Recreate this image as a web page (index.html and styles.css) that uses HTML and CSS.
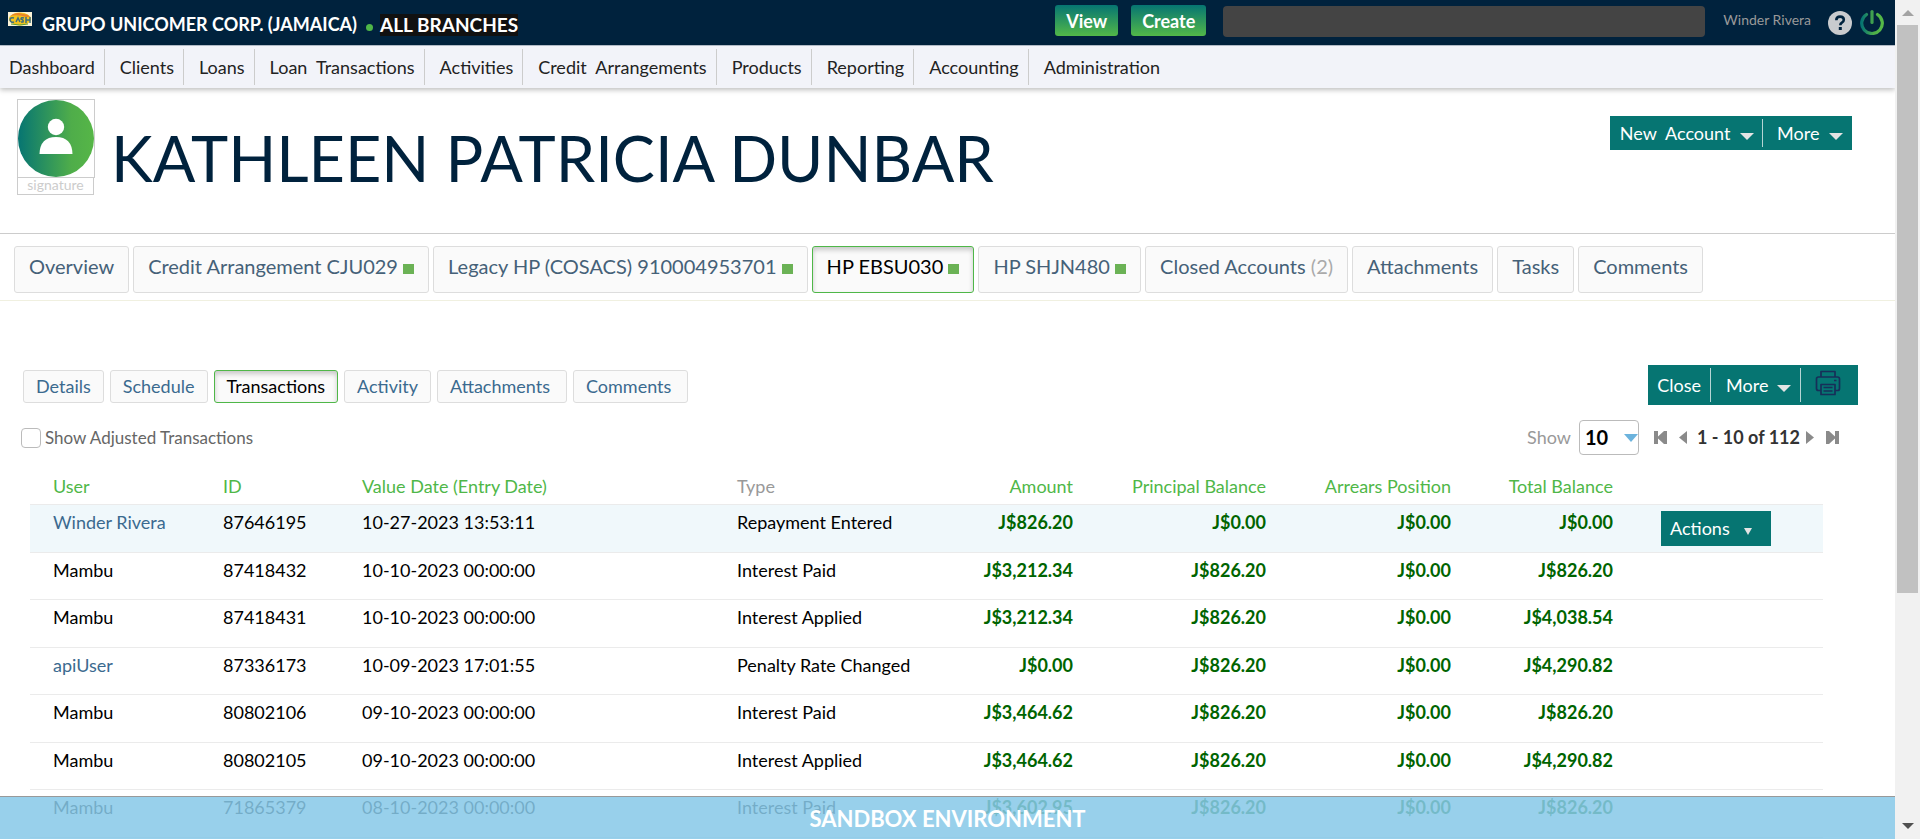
FILE: index.html
```html
<!DOCTYPE html>
<html lang="en">
<head>
<meta charset="utf-8">
<title>Kathleen Patricia Dunbar</title>
<link rel="stylesheet" href="styles.css">
</head>
<body>
<div class="app">
  <header class="topbar">
    <svg class="logo" width="24" height="14" viewBox="0 0 24 14" aria-hidden="true">
      <rect width="24" height="14" fill="#fbf3d8"/>
      <ellipse cx="12" cy="7" rx="11" ry="6.5" fill="#f3c31c"/>
      <path d="M2 4Q8 -1 15 2Q20 2 22 5L18 5Q10 2 2 4Z" fill="#e8842a"/>
      <path d="M6 6Q2 5 2 8Q3 11 6 10M8 10L10 6L12 10M16 6Q13 5 13 7Q16 8 15 10H13M18 5V11M22 5V11M18 8H22" fill="none" stroke="#3f6f7c" stroke-width="1.5"/>
      <path d="M3 12Q12 14 20 12" stroke="#5a9b3c" fill="none"/>
    </svg>
    <span class="org">GRUPO UNICOMER CORP. (JAMAICA)</span>
    <span class="branch-dot"></span>
    <span class="branch">ALL BRANCHES</span>
    <div class="topbar-right">
      <button class="top-btn" type="button">View</button>
      <button class="top-btn" type="button">Create</button>
      <input class="search" type="text" aria-label="Search">
      <a class="account" href="#">Winder Rivera</a>
      <button class="icon-btn" type="button" aria-label="Help">
        <svg width="24" height="24" viewBox="0 0 24 24"><circle cx="12" cy="12" r="12" fill="#c9cbce"/><path d="M8.3 9.2Q8.3 5.6 12.1 5.6Q15.8 5.6 15.8 8.8Q15.8 10.6 13.9 11.6Q12.3 12.5 12.3 14.2" fill="none" stroke="#00223d" stroke-width="2.6"/><rect x="10.8" y="16" width="3" height="3" fill="#00223d"/></svg>
      </button>
      <button class="icon-btn" type="button" aria-label="Log out">
        <svg width="24" height="26" viewBox="0 0 24 26"><defs><linearGradient id="pw" x1="0" x2="1"><stop offset="0" stop-color="#067572"/><stop offset=".6" stop-color="#4fae48"/><stop offset="1" stop-color="#55b947"/></linearGradient></defs><path d="M6.5 5.5A10.3 10.3 0 1 0 17.5 5.5" fill="none" stroke="url(#pw)" stroke-width="3.2" stroke-linecap="round"/><rect x="10.4" y="1" width="3.2" height="14" rx="1.6" fill="#3f9f50"/></svg>
      </button>
    </div>
  </header>

  <nav class="mainnav">
    <a href="#">Dashboard</a><a href="#">Clients</a><a href="#">Loans</a><a href="#">Loan&nbsp; Transactions</a><a href="#">Activities</a><a href="#">Credit&nbsp; Arrangements</a><a href="#">Products</a><a href="#">Reporting</a><a href="#">Accounting</a><a href="#">Administration</a>
  </nav>

  <section class="client">
    <div class="portrait">
      <div class="photo">
        <svg width="76" height="77" viewBox="0 0 76 77" aria-hidden="true"><defs><linearGradient id="av" x1="0" x2="1"><stop offset="0" stop-color="#067572"/><stop offset=".7" stop-color="#4fad4a"/><stop offset="1" stop-color="#56b647"/></linearGradient></defs><ellipse cx="38" cy="38.500" rx="38" ry="38.500" fill="url(#av)"/><circle cx="38" cy="27" r="8.200" fill="#fff"/><path d="M21.500 54Q22 37 38 37Q54 37 54.500 54Z" fill="#fff"/></svg>
      </div>
      <div class="signature">signature</div>
    </div>
    <h1 class="client-name">KATHLEEN PATRICIA DUNBAR</h1>
    <div class="toolbar client-tools">
      <button type="button">New&nbsp; Account <i class="caret"></i></button>
      <button type="button">More <i class="caret"></i></button>
    </div>
  </section>

  <nav class="tabs">
    <a href="#">Overview</a>
    <a href="#">Credit Arrangement CJU029 <i class="state"></i></a>
    <a href="#">Legacy HP (COSACS) 910004953701 <i class="state"></i></a>
    <a href="#" class="active">HP EBSU030 <i class="state"></i></a>
    <a href="#">HP SHJN480 <i class="state"></i></a>
    <a href="#">Closed Accounts <span class="count">(2)</span></a>
    <a href="#">Attachments</a>
    <a href="#">Tasks</a>
    <a href="#">Comments</a>
  </nav>

  <section class="subhead">
    <nav class="subtabs">
      <a href="#">Details</a>
      <a href="#">Schedule</a>
      <a href="#" class="active">Transactions</a>
      <a href="#">Activity</a>
      <a href="#" class="wide">Attachments</a>
      <a href="#" class="wide">Comments</a>
    </nav>
    <div class="toolbar account-tools">
      <button type="button">Close</button>
      <button type="button">More <i class="caret"></i></button>
      <button type="button" class="print" aria-label="Print">
        <svg width="26" height="26" viewBox="0 0 26 26" fill="none" stroke="#172f59" stroke-width="1.700" stroke-linejoin="round"><path d="M6 7V1.500H20V7M6 20.500H3.500Q1.500 20.500 1.500 18.500V9Q1.500 7 3.500 7H22.500Q24.500 7 24.500 9V18.500Q24.500 20.500 22.500 20.500H20M6 14.500H20V24.500H6ZM8.500 17.500H17.500M8.500 21H17.500M19 10.500H21.500"/></svg>
      </button>
    </div>
  </section>

  <section class="filters">
    <label class="adjusted"><input type="checkbox"> Show Adjusted Transactions</label>
    <div class="pager">
      <label for="size">Show</label>
      <span class="select-wrap"><select id="size"><option>10</option></select></span>
      <button type="button" aria-label="First page"><svg width="13" height="13" viewBox="0 0 13 13"><path d="M0 0H4V5.500L10 0H13V13H10L4 7.500V13H0Z" fill="#8a8a8a"/></svg></button>
      <button type="button" class="prev" aria-label="Previous page"><svg width="8" height="13" viewBox="0 0 8 13"><path d="M8 0V13L0 6.500Z" fill="#8a8a8a"/></svg></button>
      <span class="range">1 - 10 of 112</span>
      <button type="button" class="next" aria-label="Next page"><svg width="8" height="13" viewBox="0 0 8 13"><path d="M0 0V13L8 6.500Z" fill="#8a8a8a"/></svg></button>
      <button type="button" aria-label="Last page"><svg width="13" height="13" viewBox="0 0 13 13"><path d="M13 0H9V5.500L3 0H0V13H3L9 7.500V13H13Z" fill="#8a8a8a"/></svg></button>
    </div>
  </section>

  <table class="transactions">
    <colgroup><col class="c-user"><col class="c-id"><col class="c-date"><col class="c-type"><col class="c-amount"><col class="c-principal"><col class="c-arrears"><col class="c-total"><col></colgroup>
    <thead>
      <tr><th>User</th><th>ID</th><th>Value Date (Entry Date)</th><th class="plain">Type</th><th class="num">Amount</th><th class="num">Principal Balance</th><th class="num">Arrears Position</th><th class="num">Total Balance</th><td></td></tr>
    </thead>
    <tbody>
      <tr class="current"><td><a href="#">Winder Rivera</a></td><td>87646195</td><td>10-27-2023 13:53:11</td><td>Repayment Entered</td><td class="num">J$826.20</td><td class="num">J$0.00</td><td class="num">J$0.00</td><td class="num">J$0.00</td><td class="act"><button class="actions" type="button">Actions <i class="caret small"></i></button></td></tr>
      <tr><td>Mambu</td><td>87418432</td><td>10-10-2023 00:00:00</td><td>Interest Paid</td><td class="num">J$3,212.34</td><td class="num">J$826.20</td><td class="num">J$0.00</td><td class="num">J$826.20</td><td></td></tr>
      <tr><td>Mambu</td><td>87418431</td><td>10-10-2023 00:00:00</td><td>Interest Applied</td><td class="num">J$3,212.34</td><td class="num">J$826.20</td><td class="num">J$0.00</td><td class="num">J$4,038.54</td><td></td></tr>
      <tr><td><a href="#">apiUser</a></td><td>87336173</td><td>10-09-2023 17:01:55</td><td>Penalty Rate Changed</td><td class="num">J$0.00</td><td class="num">J$826.20</td><td class="num">J$0.00</td><td class="num">J$4,290.82</td><td></td></tr>
      <tr><td>Mambu</td><td>80802106</td><td>09-10-2023 00:00:00</td><td>Interest Paid</td><td class="num">J$3,464.62</td><td class="num">J$826.20</td><td class="num">J$0.00</td><td class="num">J$826.20</td><td></td></tr>
      <tr><td>Mambu</td><td>80802105</td><td>09-10-2023 00:00:00</td><td>Interest Applied</td><td class="num">J$3,464.62</td><td class="num">J$826.20</td><td class="num">J$0.00</td><td class="num">J$4,290.82</td><td></td></tr>
      <tr><td>Mambu</td><td>71865379</td><td>08-10-2023 00:00:00</td><td>Interest Paid</td><td class="num">J$3,602.95</td><td class="num">J$826.20</td><td class="num">J$0.00</td><td class="num">J$826.20</td><td></td></tr>
    </tbody>
  </table>
  <div class="sandbox">SANDBOX ENVIRONMENT</div>
</div>
<div class="scrollbar" aria-hidden="true">
  <i class="arrow up"></i>
  <div class="track"><div class="thumb"></div></div>
  <i class="arrow down"></i>
</div>
</body>
</html>
```
FILE: styles.css
```css
* { box-sizing: border-box; }
body {
  margin: 0;
  display: flex;
  height: 100vh;
  overflow: hidden;
  background: #fff;
  color: #000;
  font: 18px/24px Lato, "Open Sans", sans-serif;
}
a { color: #3b6a8f; text-decoration: none; }
button, input, select { font: inherit; margin: 0; }
button { border: 0; padding: 0; background: none; cursor: pointer; }
svg { display: block; }

.app { position: relative; flex: 1; min-width: 0; overflow: hidden; }

.topbar {
  display: flex;
  align-items: flex-start;
  height: 46px;
  padding: 5px 11px 0 8px;
  background: #00223d;
  border-bottom: 1px solid #b9c3cf;
  color: #fff;
}
.logo { margin-top: 7px; }
.org { margin: 7px 9px 0 10px; font-weight: 700; }
.branch-dot { width: 7px; height: 7px; margin: 19px 7px 0 0; border-radius: 50%; background: #4fb748; }
.branch { margin-top: 9px; background: #111; font-size: 19px; line-height: 22px; font-weight: 700; }
.topbar-right { display: flex; align-items: flex-start; margin-left: auto; }
.top-btn {
  height: 31px;
  margin-right: 13px;
  padding: 0 11px;
  border-radius: 3px;
  background: linear-gradient(#067572, #52b848);
  color: #fff;
  font-weight: 700;
}
.search { width: 482px; height: 31px; margin: 1px 18px 0 4px; border: 0; border-radius: 4px; background: #444; color: #fff; }
.account { margin-right: 17px; padding-top: 3px; color: #999; font-size: 14px; }
.icon-btn { margin: 6px 0 0; }
.icon-btn + .icon-btn { margin: 4px 0 0 8px; }

.mainnav {
  display: flex;
  height: 42px;
  padding: 3px 0;
  background: #f2f3f9;
  box-shadow: 0 2px 5px rgba(0, 0, 0, .25);
}
.mainnav a { padding: 6px 9px 0 15px; border-right: 1px solid #ccc; color: #222; }
.mainnav a:first-child { padding-left: 9px; }
.mainnav a:last-child { border: 0; }

.client {
  display: flex;
  align-items: flex-start;
  height: 146px;
  padding: 11px 43px 0 17px;
  border-bottom: 1px solid #ccc;
}
.photo { width: 78px; height: 79px; border: 1px solid #ccc; }
.signature { width: 77px; height: 17px; border: 1px solid #ccc; border-top: 0; color: #ccc; font-size: 14px; line-height: 14px; text-align: center; }
.client-name { margin: 19px 0 0 16px; color: #00223d; font-size: 63px; line-height: 80px; font-weight: 400; }

.toolbar { display: flex; margin-left: auto; padding: 3px 0; background: #067572; color: #fff; }
.toolbar button { color: #fff; }
.toolbar button + button { border-left: 1px solid #b5d5d4; }
.caret {
  display: inline-block;
  margin-left: 5px;
  border: solid transparent;
  border-width: 7px 7px 0;
  border-top-color: #e4e4e4;
}
.caret.small { margin-left: 10px; border-width: 7px 4px 0; }
.client-tools { height: 34px; margin-top: 17px; }
.client-tools button { padding: 0 8px 0 10px; }
.client-tools button + button { padding: 0 9px 0 14px; }

.tabs { display: flex; gap: 4px; padding: 12px 14px 7px; border-bottom: 1px solid #f0f0e0; }
.tabs a, .subtabs a { border: 1px solid #ddd; border-radius: 3px; background: #fafafa; }
.tabs a { height: 47px; padding: 7px 14px 0; color: #456178; font-size: 20px; white-space: nowrap; }
.tabs .active, .subtabs .active { border-color: #4fb748; color: #000; box-shadow: inset 0 3px 5px rgba(0, 0, 0, .2); }
.state { display: inline-block; width: 11px; height: 10px; background: #6bb255; }
.count { color: #aaa; }

.subhead { display: flex; align-items: flex-start; padding: 64px 37px 0 23px; }
.subtabs { display: flex; gap: 6px; padding-top: 5px; }
.subtabs a { height: 33px; padding: 3px 12px 0; }
.subtabs .wide { padding-right: 16px; }
.account-tools { height: 40px; }
.account-tools button { padding: 0 9px; }
.account-tools button + button { padding-left: 15px; }
.account-tools .caret { margin-left: 4px; }
.account-tools .print { display: flex; padding: 2px 17px 0 14px; }

.filters { display: flex; align-items: center; height: 65px; padding: 0 56px 1px 21px; }
.adjusted { display: flex; align-items: center; gap: 4px; padding-top: 2px; color: #666; font-size: 17px; }
.adjusted input { appearance: none; width: 20px; height: 20px; border: 1px solid #bbb; border-radius: 4px; background: #fff; }
.pager { display: flex; align-items: center; margin-left: auto; }
.pager label { margin-right: 8px; color: #999; }
.pager button { margin-left: 12px; }
.pager button:first-of-type { margin-left: 15px; }
.pager .next { margin: 0 0 0 6px; }
.range { margin-left: 10px; color: #333; font-weight: 700; }
.select-wrap { position: relative; }
.select-wrap::after { content: ""; position: absolute; right: 1px; top: 14px; border: solid transparent; border-width: 8px 7px 0; border-top-color: #6cb3dd; pointer-events: none; }
.select-wrap select { display: block; appearance: none; width: 60px; height: 35px; padding: 0 5px; border: 1px solid #bbb; border-radius: 4px; background: #fff; color: #000; font-size: 20px; font-weight: 700; }

.transactions { width: calc(100% - 102px); margin-left: 30px; border-collapse: collapse; table-layout: fixed; }
.transactions th, .transactions td { padding: 5px 0 0; border-bottom: 1px solid #ebebeb; text-align: left; vertical-align: top; font-weight: 400; white-space: nowrap; }
.transactions th { color: #4fb748; }
.transactions .plain { color: #999; }
.transactions th:first-child, .transactions td:first-child { padding-left: 23px; }
.transactions thead tr { height: 34px; }
.transactions thead th { padding-top: 4px; }
.transactions tbody tr:nth-child(odd) { height: 48px; }
.transactions tbody tr:nth-child(even) { height: 47px; }
.transactions .num { text-align: right; }
.transactions td.num { color: #006400; font-weight: 700; }
.current { background: #f0f8fb; }
.transactions .act { padding: 6px 0 0 48px; }
.actions { display: block; height: 35px; padding: 0 19px 0 9px; background: #067572; color: #fff; }
.c-user { width: 193px; }
.c-id { width: 139px; }
.c-date { width: 375px; }
.c-type { width: 200px; }
.c-amount { width: 136px; }
.c-principal { width: 193px; }
.c-arrears { width: 185px; }
.c-total { width: 162px; }

.sandbox {
  position: absolute;
  left: 0;
  right: 0;
  bottom: 0;
  height: 43px;
  padding-top: 9px;
  border-top: 1px solid #999;
  background: rgba(135, 200, 232, .86);
  color: #fff;
  font-size: 22px;
  line-height: 26px;
  font-weight: 700;
  text-align: center;
}

.scrollbar { display: flex; flex-direction: column; align-items: center; width: 25px; padding: 10px 2px; background: #f1f1f1; }
.arrow { border: solid transparent; }
.arrow.up { border-width: 0 6px 6px; border-bottom-color: #a3a3a3; }
.arrow.down { border-width: 6px 6px 0; border-top-color: #505050; }
.track { flex: 1; width: 100%; padding: 9px 0; }
.thumb { height: 72%; background: #c1c1c1; }
```
